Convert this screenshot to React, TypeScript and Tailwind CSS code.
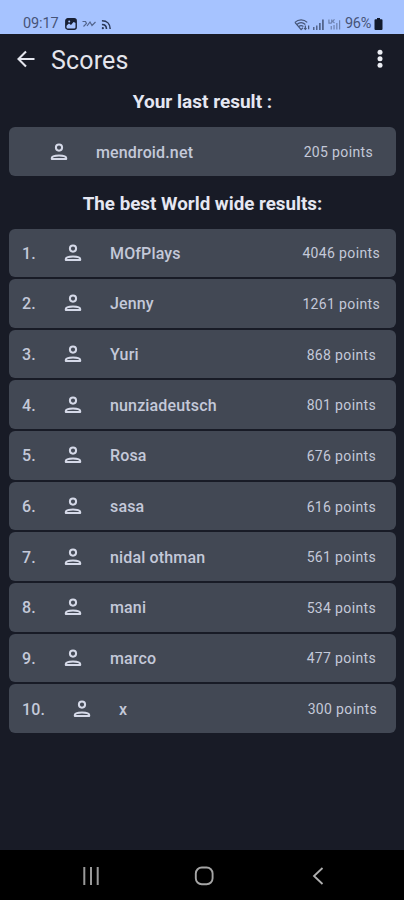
import clsx from 'clsx';

interface Score {
  name: string;
  points: number;
}

const lastResult: Score = { name: 'mendroid.net', points: 205 };

const bestResults: Score[] = [
  { name: 'MOfPlays', points: 4046 },
  { name: 'Jenny', points: 1261 },
  { name: 'Yuri', points: 868 },
  { name: 'nunziadeutsch', points: 801 },
  { name: 'Rosa', points: 676 },
  { name: 'sasa', points: 616 },
  { name: 'nidal othman', points: 561 },
  { name: 'mani', points: 534 },
  { name: 'marco', points: 477 },
  { name: 'x', points: 300 },
];

const PersonIcon = () => (
  <svg viewBox="0 0 18 18" className="h-[18px] w-[18px] shrink-0" fill="none" stroke="#d5d9e8" strokeWidth="2">
    <circle cx="9" cy="4.6" r="3.1" />
    <path d="M1.8 16v-.9c0-1.9 3.4-2.7 7.2-2.7s7.2.8 7.2 2.7v.9z" strokeLinejoin="round" />
  </svg>
);

const StatusBar = () => (
  <div className="flex h-[34px] items-end justify-between bg-[#a6c3ff] pr-[21px] pl-[23px] text-[#465478]">
    <div className="flex h-5 items-center">
      <span className="w-[42px] text-[14.5px] tracking-[-0.1px]">09:17</span>
      <svg viewBox="0 0 12 12" className="h-3 w-3">
        <rect x=".8" y=".8" width="10.4" height="10.4" rx="2" fill="#a6c3ff" stroke="#182034" strokeWidth="1.4" />
        <path d="M1 1h10v4L8.5 4 6 7 4 5.5 1 8z" fill="#182034" />
        <circle cx="4.2" cy="3.6" r="1" fill="#a6c3ff" />
      </svg>
      <svg viewBox="0 0 14 10" className="ml-[5px] h-2.5 w-3.5" fill="none" stroke="#53658d" strokeWidth="1.2">
        <path d="M.5 2.5h3l1 2-3 3M5 7l3-4 2 3.5L13.5 3" />
      </svg>
      <svg viewBox="0 0 12 12" className="ml-[5px] h-[11px] w-[11px]" fill="none" stroke="#2a3858" strokeWidth="1.7">
        <path d="M1 2c5.5 0 9 3.5 9 9M1 6c3 0 5 2 5 5" />
        <circle cx="2" cy="10" r="1.2" fill="#2a3858" stroke="none" />
      </svg>
    </div>
    <div className="flex h-5 items-center">
      <svg viewBox="0 0 18 13" className="h-[13px] w-[17px]" fill="none" stroke="#465678" strokeWidth="1.3">
        <path d="M1 4.2c3.8-3.6 9.2-3.6 13 0M3 6.5c2.8-2.4 6.2-2.4 9 0M5 8.7c1.6-1.3 3.4-1.3 5 0" />
        <path d="M1 4.2 7.5 12l2-2M12 7.5v4M10.8 10.3l1.2 1.4 1.2-1.4M15.5 11.5v-4" />
      </svg>
      <svg viewBox="0 0 13 12" className="ml-px h-3 w-[13px]" fill="#53658d">
        <path d="M1 9h1.5v3H1zM4 7.5h1.5V12H4zM7 5h1.7v7H7zM10 1.5h1.8V12H10z" />
      </svg>
      <svg viewBox="0 0 14 13" className="ml-[3px] h-[13px] w-[13px]" fill="none" stroke="#6d82b0" strokeWidth="1.3">
        <path d="M1 1v4h3M4 1v4M7 1 5 3l2 2M3.5 12V8M6.5 12V7M9.5 12V5M12.5 12V2" />
      </svg>
      <span className="ml-[4px] w-[29px] text-[14.5px] tracking-[-0.3px]">96%</span>
      <svg viewBox="0 0 9 12" className="h-3 w-[9px]" fill="#111a2c">
        <path d="M3 0h3v1.3h1.5q1 0 1 1V11q0 1-1 1h-6q-1 0-1-1V2.3q0-1 1-1H3z" />
      </svg>
    </div>
  </div>
);

const AppBar = () => (
  <header className="flex h-[53px] items-center pr-[21px] pb-[3px] pl-[17px]">
    <svg viewBox="0 0 18 18" className="h-[18px] w-[18px]" fill="none" stroke="#e4e6ee" strokeWidth="2.1">
      <path d="M17.5 9H2M9 1.5 1.5 9 9 16.5" />
    </svg>
    <h1 className="ml-4 pt-1 text-[25px] leading-8 tracking-[0.15px] text-[#e4e5ec]">Scores</h1>
    <svg viewBox="0 0 6 20" className="ml-auto h-5 w-1.5" fill="#eceef4">
      <circle cx="3" cy="3.2" r="2.5" />
      <circle cx="3" cy="9.7" r="2.5" />
      <circle cx="3" cy="16.2" r="2.5" />
    </svg>
  </header>
);

const ScoreRow = ({ score, rank }: { score: Score; rank?: number }) => (
  <div
    className={clsx(
      'flex items-center rounded-[6px] bg-[#424854] text-[#c4c9d9]',
      rank ? 'h-[48.65px]' : 'h-[49px]',
      !rank && 'pr-[23px] pl-[41px]',
      rank && 'pl-[13px]',
      rank && (score.points > 999 ? 'pr-4' : rank > 9 ? 'pr-[19px]' : 'pr-5'),
    )}
  >
    {rank && (
      <span className={clsx('pt-0.5 text-base font-medium tracking-[0.15px]', rank > 9 ? 'w-[51px]' : 'w-[42px]')}>
        {rank}.
      </span>
    )}
    <PersonIcon />
    <span className="ml-7 pt-0.5 text-base font-medium tracking-[0.15px]">{score.name}</span>
    <span className="ml-auto pt-px text-sm tracking-[0.35px]">{score.points} points</span>
  </div>
);

const NavigationBar = () => (
  <nav className="flex h-[50px] items-center bg-black pt-0.5 pl-[82px]">
    <svg viewBox="0 0 18 18" className="h-[18px] w-[18px]" stroke="#9a9a9a" strokeWidth="2">
      <path d="M2.3 0v18M9 0v18M15.7 0v18" />
    </svg>
    <svg viewBox="0 0 20 20" className="ml-[94px] h-5 w-5" fill="none" stroke="#a5a5a5" strokeWidth="1.9">
      <rect x="1.8" y="1.5" width="16.8" height="16.8" rx="6" />
    </svg>
    <svg viewBox="0 0 12 18" className="ml-[98px] h-[18px] w-3" fill="none" stroke="#b0b0b0" strokeWidth="1.8">
      <path d="M10.5 1 2 9l8.5 8" />
    </svg>
  </nav>
);

const App = () => {
  return (
    <div className="flex h-[900px] w-[404px] flex-col overflow-hidden bg-[#181b26] font-[Roboto,sans-serif]">
      <StatusBar />
      <AppBar />
      <main className="flex-1 pr-2 pl-[9px]">
        <h2 className="flex h-10 items-center justify-center pb-[9px] text-[19px] font-bold text-[#e5e7f2]">
          Your last result :
        </h2>
        <ScoreRow score={lastResult} />
        <h2 className="flex h-[52.5px] items-center justify-center pt-[3px] text-[18.8px] font-bold text-[#e5e7f2]">
          The best World wide results:
        </h2>
        <div className="flex flex-col gap-[2px]">
          {bestResults.map((score, index) => (
            <ScoreRow key={score.name} score={score} rank={index + 1} />
          ))}
        </div>
      </main>
      <NavigationBar />
    </div>
  );
};

export default App;
